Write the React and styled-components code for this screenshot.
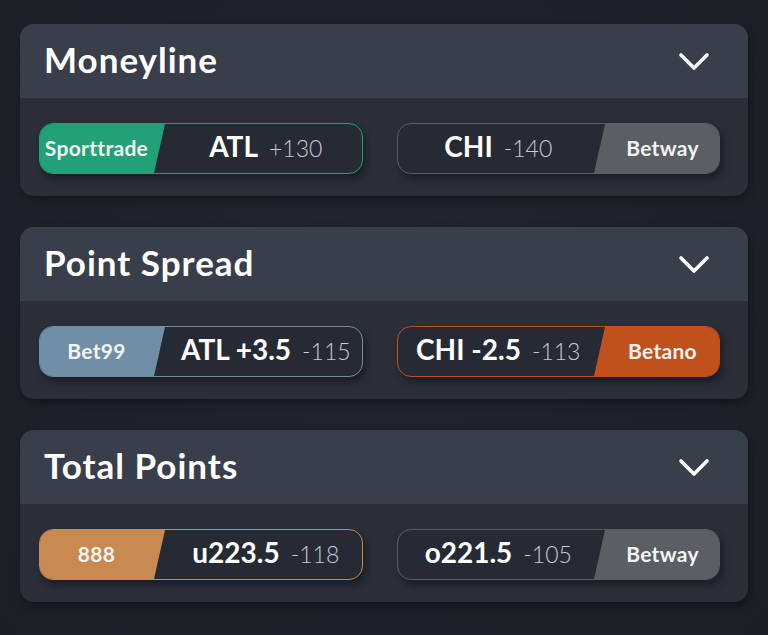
import styled, { createGlobalStyle } from "styled-components";

const GlobalStyle = createGlobalStyle`
  html, body {
    margin: 0;
    padding: 0;
    background: #1e212b;
  }
  body {
    font-family: "Lato", "Inter", sans-serif;
    -webkit-font-smoothing: antialiased;
  }
`;

const MARKETS = [
  {
    title: "Moneyline",
    left: { book: "Sporttrade", color: "#22a077", label: "ATL", odds: "+130" },
    right: { book: "Betway", color: "#5b5e65", label: "CHI", odds: "-140" },
  },
  {
    title: "Point Spread",
    left: { book: "Bet99", color: "#6f8fa9", label: "ATL +3.5", odds: "-115" },
    right: { book: "Betano", color: "#c0501c", label: "CHI -2.5", odds: "-113" },
  },
  {
    title: "Total Points",
    left: { book: "888", color: "#c88a50", label: "u223.5", odds: "-118" },
    right: { book: "Betway", color: "#5b5e65", label: "o221.5", odds: "-105" },
  },
];

function Chevron() {
  return (
    <svg width="32" height="22" viewBox="0 0 32 22" fill="none">
      <path
        d="M3 5 L16 18 L29 5"
        stroke="#ffffff"
        strokeWidth="3.6"
        strokeLinecap="round"
        strokeLinejoin="round"
      />
    </svg>
  );
}

function BetPill({ bet, side }) {
  const book = (
    <Book $color={bet.color} $side={side}>
      {bet.book}
    </Book>
  );
  return (
    <Pill $color={bet.color}>
      {side === "left" && book}
      <Odds $side={side}>
        <strong>{bet.label}</strong>
        <span>{bet.odds}</span>
      </Odds>
      {side === "right" && book}
    </Pill>
  );
}

export default function App() {
  return (
    <Page>
      <GlobalStyle />
      {MARKETS.map((m) => (
        <Card key={m.title}>
          <CardHeader>
            <h2>{m.title}</h2>
            <Chevron />
          </CardHeader>
          <CardBody>
            <BetPill bet={m.left} side="left" />
            <BetPill bet={m.right} side="right" />
          </CardBody>
        </Card>
      ))}
    </Page>
  );
}

// STYLES
const Page = styled.div`
  width: 768px;
  height: 635px;
  box-sizing: border-box;
  padding: 24px 20px 0 20px;
  display: flex;
  flex-direction: column;
  gap: 31px;
  background: radial-gradient(ellipse at 50% 40%, #222530 0%, #1c1f28 100%);
`;

const Card = styled.div`
  border-radius: 14px;
  overflow: hidden;
  background: #2b2f3a;
  box-shadow: 2px 4px 8px rgba(0, 0, 0, 0.35);
`;

const CardHeader = styled.div`
  height: 74px;
  display: flex;
  align-items: center;
  justify-content: space-between;
  padding: 0 38px 0 24px;
  background: #393e4b;

  h2 {
    margin: 0;
    color: #ffffff;
    font-size: 35px;
    font-weight: 700;
    letter-spacing: 1px;
    padding-bottom: 4px;
  }
`;

const CardBody = styled.div`
  height: 98px;
  box-sizing: border-box;
  padding: 25px 28px 0 19px;
  display: flex;
  gap: 34px;
`;

const Pill = styled.div`
  flex: 1;
  height: 51px;
  box-sizing: border-box;
  border: 1.5px solid ${(p) => p.$color};
  border-radius: 14px;
  overflow: hidden;
  display: flex;
  background: #262a34;
  box-shadow: 3px 5px 8px rgba(0, 0, 0, 0.4);
`;

const Book = styled.div`
  width: 125px;
  box-sizing: border-box;
  flex: none;
  display: flex;
  align-items: center;
  justify-content: center;
  background: ${(p) => p.$color};
  color: #f2f4f2;
  font-size: 21px;
  font-weight: 700;
  letter-spacing: 0.3px;
  padding: ${(p) => (p.$side === "left" ? "0 12px 2px 0" : "0 0 2px 12px")};
  clip-path: ${(p) =>
    p.$side === "left"
      ? "polygon(0 0, 100% 0, calc(100% - 11px) 100%, 0 100%)"
      : "polygon(11px 0, 100% 0, 100% 100%, 0 100%)"};
  margin-${(p) => (p.$side === "left" ? "right" : "left")}: -11px;
`;

const Odds = styled.div`
  flex: 1;
  display: flex;
  align-items: baseline;
  justify-content: center;
  gap: 11px;
  padding-top: 5px;
  ${(p) => (p.$side === "left" ? "padding-left: 16px;" : "padding-right: 6px;")}

  strong {
    color: #ffffff;
    font-size: 28px;
    font-weight: 700;
  }
  span {
    color: #c8cbd3;
    font-size: 23px;
    font-weight: 300;
  }
`;
